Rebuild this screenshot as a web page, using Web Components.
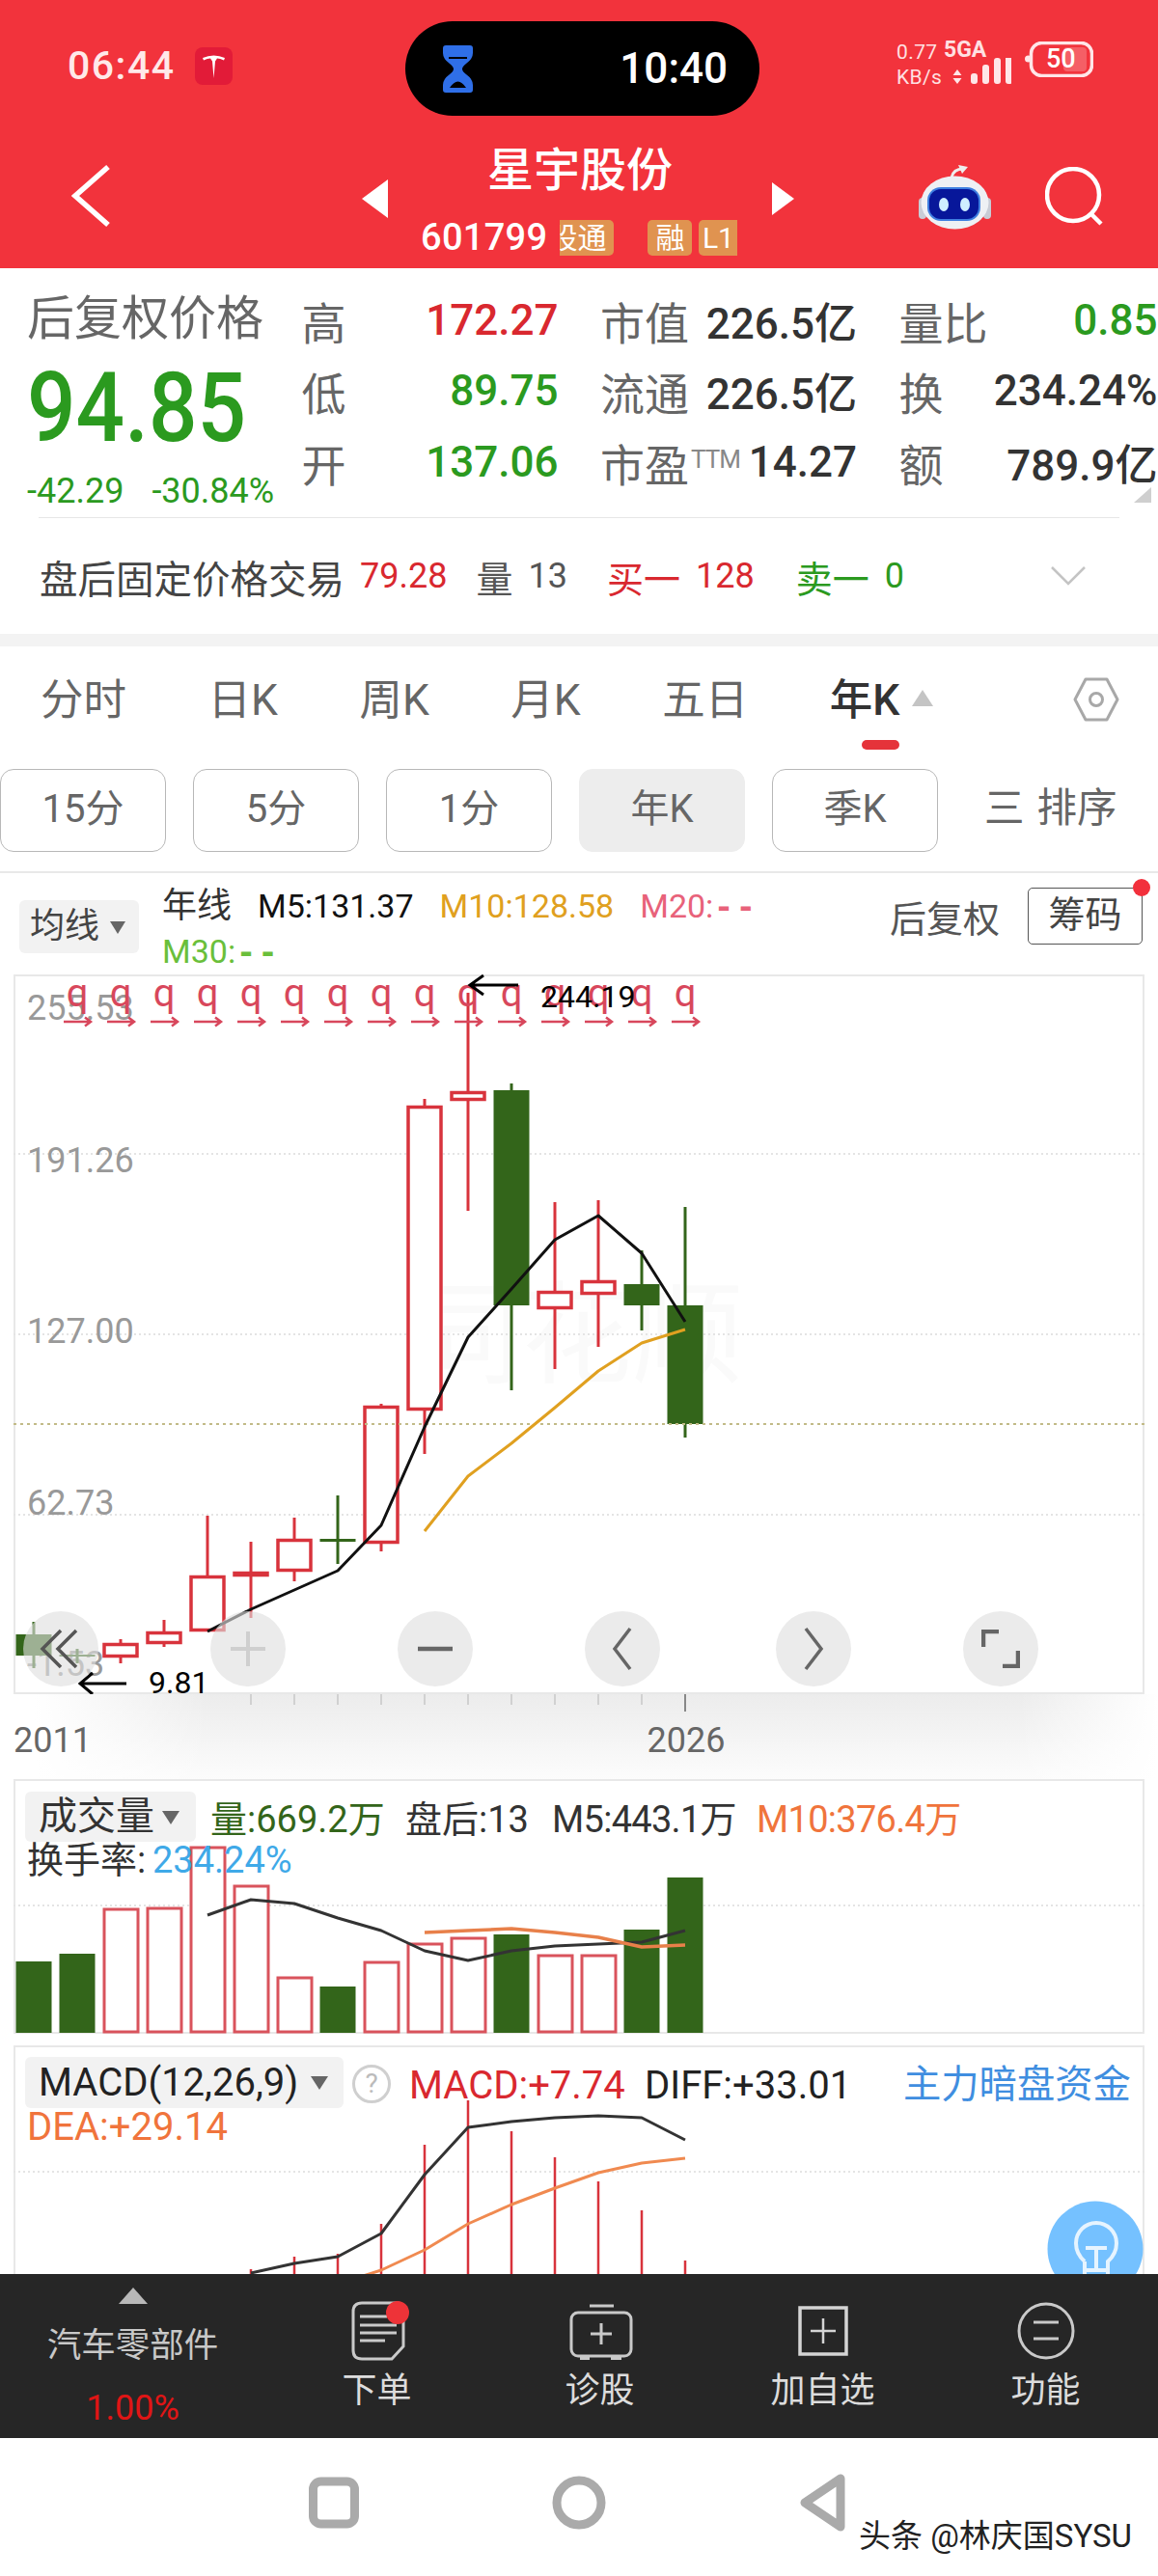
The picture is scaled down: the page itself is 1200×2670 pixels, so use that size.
<!DOCTYPE html>
<html lang="zh-CN">
<head>
<meta charset="utf-8">
<title>星宇股份</title>
<style>
html, body { margin: 0; background: #fff; }
body {
  width: 1200px;
  height: 2670px;
  overflow: hidden;
  font-family: Roboto, "Noto Sans CJK SC", sans-serif;
  color: #333;
}
</style>
</head>
<body>
<status-bar></status-bar>
<stock-header></stock-header>
<quote-panel>
  <quote-cell label="高" tone="red">172.27</quote-cell>
  <quote-cell label="市值">226.5亿</quote-cell>
  <quote-cell label="量比" tone="green">0.85</quote-cell>
  <quote-cell label="低" tone="green">89.75</quote-cell>
  <quote-cell label="流通">226.5亿</quote-cell>
  <quote-cell label="换">234.24%</quote-cell>
  <quote-cell label="开" tone="green">137.06</quote-cell>
  <quote-cell label="市盈" sup="TTM">14.27</quote-cell>
  <quote-cell label="额">789.9亿</quote-cell>
</quote-panel>
<period-tabs></period-tabs>
<chart-legend></chart-legend>
<kline-chart></kline-chart>
<time-axis></time-axis>
<volume-chart></volume-chart>
<macd-chart></macd-chart>
<action-bar>
  <action-item label="下单">
    <svg width="70" height="70" viewBox="355 2385 70 70" fill="none" stroke="#c9c9c9" stroke-width="3">
      <path d="M374 2388H410Q417 2388 417 2395V2433L405 2446H374Q365 2446 365 2437V2397Q365 2388 374 2388Z"/>
      <path d="M372 2402H400M372 2411H410M372 2419H410M372 2427H398"/>
      <circle cx="411" cy="2398" r="12" fill="#ee3338" stroke="none"/>
    </svg>
  </action-item>
  <action-item label="诊股">
    <svg width="70" height="70" viewBox="586 2385 70 70" fill="none" stroke="#c9c9c9" stroke-width="3">
      <path d="M610 2391H635"/>
      <rect x="591" y="2398" width="62" height="45" rx="7"/>
      <path d="M600 2445H610M632 2445H643" stroke-width="4"/>
      <path d="M622 2409V2431M611 2420H633"/>
    </svg>
  </action-item>
  <action-item label="加自选">
    <svg width="70" height="70" viewBox="818 2385 70 70" fill="none" stroke="#d4d4d4" stroke-width="3.5">
      <rect x="829" y="2393" width="48" height="48"/>
      <path d="M853 2404V2430M840 2417H866" stroke-width="2.5"/>
    </svg>
  </action-item>
  <action-item label="功能">
    <svg width="70" height="70" viewBox="1049 2385 70 70" fill="none" stroke="#c9c9c9" stroke-width="3">
      <circle cx="1084" cy="2417" r="28"/>
      <path d="M1071 2408H1097M1071 2425H1097"/>
    </svg>
  </action-item>
</action-bar>
<nav-bar></nav-bar>

<script>
const RED = "#d8333c";
const GREEN = "#33651a";
const XS = Array.from({ length: 16 }, (_, i) => 35 + i * 45);

// every custom element here has the same shape: fixed markup in an open shadow root
class ShadowPart extends HTMLElement {
  constructor() {
    super();
    const root = this.attachShadow({ mode: "open" });
    root.innerHTML = `<style>${this.constructor.css}</style>${this.markup()}`;
  }
  markup() {
    return "";
  }
}

const line = (points, color, width) =>
  `<polyline fill="none" stroke="${color}" stroke-width="${width}" stroke-linejoin="round" points="${points
    .map((p) => p.join(","))
    .join(" ")}"/>`;

const hline = (y, color, dash, width = 2) =>
  `<path d="M14 ${y}H1186" stroke="${color}" stroke-width="${width}" stroke-dasharray="${dash}"/>`;

class StatusBar extends ShadowPart {
  static css = `
  :host { display: grid; grid-template-columns: 420px 367px 1fr; height: 142px; background: #f2333c; color: #fff; align-items: center; }
  .left { display: flex; align-items: center; padding: 0 0 6px 70px; gap: 20px; font-size: 41px; font-weight: 500; letter-spacing: 1.5px; color: #ffe9e9; }
  .pill { height: 98px; background: #000; border-radius: 49px; display: flex; align-items: center; justify-content: space-between; padding: 0 33px 0 39px; font-size: 44px; font-weight: 500; box-sizing: border-box; }
  .right { display: flex; align-items: flex-start; padding: 0 0 6px 142px; color: #ffe0e2; }
  .net { font-size: 21px; line-height: 26px; width: 49px; letter-spacing: .4px; }
  .sig { width: 84px; font-size: 23px; font-weight: 700; line-height: 22px; }
  .sig svg { display: block; margin-top: -3px; margin-left: -2px; }
  .bat { position: relative; width: 71px; height: 37px; font-size: 27px; font-weight: 500; color: #fff; margin-top: 2px; }
  .bat span { position: absolute; left: 22px; top: 3px; line-height: 30px; }
  `;
  markup() {
    return `
    <div class="left">06:44
      <svg width="39" height="39" viewBox="0 0 39 39">
        <rect width="39" height="39" rx="8" fill="#e21b38"/>
        <path d="M8 11Q19.5 6 31 11L30 13.5Q26 11.5 23 11.5L21 14.5L19.5 32L18 14.5L16 11.5Q13 11.5 9 13.5Z" fill="#fff"/>
      </svg>
    </div>
    <div class="pill">
      <svg width="31" height="49" viewBox="0 0 31 49">
        <path d="M3 0H28Q31 0 31 3V8Q31 14 24 19Q20 22 20 24.5Q20 27 24 30Q31 35 31 41V46Q31 49 28 49H3Q0 49 0 46V41Q0 35 7 30Q11 27 11 24.5Q11 22 7 19Q0 14 0 8V3Q0 0 3 0Z" fill="#2f6fe8"/>
        <path d="M6 13H25" stroke="#000" stroke-width="2"/>
        <path d="M7 44Q15.5 31 24 44Z" fill="#000"/>
      </svg>
      <span>10:40</span>
    </div>
    <div class="right">
      <div class="net">0.77<br>KB/s</div>
      <div class="sig">5GA
        <svg width="72" height="36" viewBox="0 0 72 36" fill="#ffe6e8">
          <path d="M16 7L20.500 13H11.500ZM11.500 16H20.500L16 22Z" transform="translate(0 5)"/>
          <rect x="30" y="16" width="7" height="11" rx="3"/>
          <rect x="42" y="7" width="7" height="20" rx="3"/>
          <rect x="54" y="0" width="7" height="27" rx="3"/>
          <rect x="66" y="-8" width="7" height="35" rx="3"/>
        </svg>
      </div>
      <div class="bat">
        <svg width="71" height="37" viewBox="0 0 71 37" fill="none">
          <circle cx="3.500" cy="18" r="3.500" fill="#ffe6e8"/>
          <rect x="40" y="6" width="24" height="25" rx="4" fill="#fff" fill-opacity=".22"/>
          <rect x="6.500" y="1.500" width="63" height="34" rx="11" stroke="#ffe6e8" stroke-width="3.500"/>
        </svg>
        <span>50</span>
      </div>
    </div>`;
  }
}
customElements.define("status-bar", StatusBar);

class StockHeader extends ShadowPart {
  static css = `
  :host { display: grid; grid-template-columns: 375px 27px 398px 23px 1fr; height: 136px; background: #f2333c; color: #fff; align-items: center; }
  .back { padding: 0 0 14px 74px; }
  .back svg { display: block; }
  .tri { margin-bottom: 8px; display: block; }
  .mid { display: flex; flex-direction: column; height: 136px; }
  .name { font-size: 48px; line-height: 70px; text-align: center; height: 70px; font-weight: 500; }
  .code { display: flex; align-items: center; padding-left: 34px; margin-top: 12px; font-size: 38px; font-weight: 500; letter-spacing: .3px; }
  .tag { height: 37px; line-height: 37px; background: #e09350; font-size: 30px; font-weight: 400; color: #fff; box-sizing: border-box; overflow: hidden; display: flex; justify-content: center; letter-spacing: 0; white-space: nowrap; }
  .t1 { width: 56px; margin-left: 13px; justify-content: flex-end; padding-right: 8px; border-radius: 0 5px 5px 0; }
  .t2 { width: 46px; margin-left: 35px; border-radius: 5px; }
  .t3 { width: 40px; margin-left: 7px; border-radius: 5px 0 0 5px; }
  .tools { display: flex; align-items: center; padding: 0 0 12px 129px; gap: 55px; }
  `;
  markup() {
    return `
    <div class="back">
      <svg width="42" height="66" viewBox="0 0 42 66" fill="none" stroke="#fff" stroke-width="5.500">
        <path d="M38 3L4 33L38 63"/>
      </svg>
    </div>
    <svg class="tri" width="27" height="40" viewBox="0 0 27 40"><path d="M27 0V40L0 20Z" fill="#fff"/></svg>
    <div class="mid">
      <div class="name">星宇股份</div>
      <div class="code">601799
        <span class="tag t1">股通</span><span class="tag t2">融</span><span class="tag t3">L1</span>
      </div>
    </div>
    <svg class="tri" width="23" height="34" viewBox="0 0 23 34"><path d="M0 0V34L23 17Z" fill="#fff"/></svg>
    <div class="tools">
      <svg width="76" height="70" viewBox="952 169 76 70">
        <path d="M986 184Q988 175 998 175" fill="none" stroke="#eee" stroke-width="3"/>
        <path d="M993 171L1003 173L997 180Z" fill="#eee"/>
        <rect x="952" y="205" width="8" height="22" rx="4" fill="#c8ccd6"/>
        <rect x="1019" y="205" width="8" height="22" rx="4" fill="#c8ccd6"/>
        <ellipse cx="989.500" cy="210" rx="35" ry="27.500" fill="#eef0f4"/>
        <rect x="961" y="194" width="55" height="35" rx="14" fill="#3f7fe0"/>
        <rect x="963" y="196" width="51" height="31" rx="12" fill="#07179a"/>
        <ellipse cx="978" cy="212" rx="5" ry="7" fill="#cfefff"/>
        <ellipse cx="1000" cy="212" rx="5" ry="7" fill="#cfefff"/>
      </svg>
      <svg width="60" height="62" viewBox="1081 175 60 62" fill="none" stroke="#fff" stroke-width="4.500">
        <circle cx="1110" cy="204" r="27"/>
        <path d="M1128 223L1139 234"/>
      </svg>
    </div>`;
  }
}
customElements.define("stock-header", StockHeader);

class QuoteCell extends ShadowPart {
  static css = `
  :host { display: flex; align-items: center; justify-content: space-between; height: 73.500px; white-space: nowrap; }
  .k { font-size: 46px; color: #666; }
  .k sup { font-size: 26px; color: #888; vertical-align: 14px; line-height: 0; margin-left: 2px; letter-spacing: -1px; }
  .v { font-size: 44px; font-weight: 500; color: #333; }
  :host([tone="red"]) .v { color: #d9282f; }
  :host([tone="green"]) .v { color: #2b9a1f; }
  `;
  markup() {
    const sup = this.getAttribute("sup");
    return `<span class="k">${this.getAttribute("label")}${sup ? `<sup>${sup}</sup>` : ""}</span><span class="v"><slot></slot></span>`;
  }
}
customElements.define("quote-cell", QuoteCell);

class QuotePanel extends ShadowPart {
  static css = `
  :host { display: block; position: relative; height: 379px; background: #fff; }
  .top { display: grid; grid-template-columns: 241px 266px 266px 268px; grid-template-rows: repeat(3, 73.500px); column-gap: 43.500px; padding: 17px 0 0 28px; height: 258px; box-sizing: border-box; }
  .side { grid-row: 1 / span 3; grid-column: 1; display: flex; flex-direction: column; margin-top: 2px; white-space: nowrap; }
  .title { font-size: 49px; line-height: 68px; color: #666; }
  .price { font-size: 100px; line-height: 116px; font-weight: 500; color: #2b9a1f; transform: scaleX(.89); transform-origin: left; }
  .chg { font-size: 36px; line-height: 44px; color: #2b9a1f; display: flex; gap: 29px; margin-top: 6px; }
  .corner { position: absolute; left: 1175px; top: 227px; }
  .rule { height: 1px; background: #e6e6e6; margin: 0 40px; }
  .fixed { display: flex; align-items: center; height: 120px; padding-left: 41px; font-size: 36px; white-space: nowrap; color: #555; }
  .fixed .lab { font-size: 39.500px; color: #444; }
  .fixed .cn { font-size: 38px; }
  .r { color: #d9282f; } .g { color: #2b9a1f; }
  .fixed svg { margin-left: auto; margin-right: 75px; }
  `;
  markup() {
    return `
    <div class="top">
      <div class="side">
        <div class="title">后复权价格</div>
        <div class="price">94.85</div>
        <div class="chg"><span>-42.29</span><span>-30.84%</span></div>
      </div>
      <slot></slot>
    </div>
    <svg class="corner" width="18" height="16" viewBox="0 0 18 16"><path d="M18 0V16H0Z" fill="#cfcfcf"/></svg>
    <div class="rule"></div>
    <div class="fixed">
      <span class="lab">盘后固定价格交易</span>
      <span class="r" style="margin-left:16px">79.28</span>
      <span class="cn" style="margin-left:30px">量</span>
      <span style="margin-left:16px">13</span>
      <span class="cn r" style="margin-left:41px">买一</span>
      <span class="r" style="margin-left:16px">128</span>
      <span class="cn g" style="margin-left:43px">卖一</span>
      <span class="g" style="margin-left:16px">0</span>
      <svg width="36" height="20" viewBox="0 0 36 20" fill="none" stroke="#c4c4c4" stroke-width="2.500"><path d="M1 1L18 18L35 1"/></svg>
    </div>`;
  }
}
customElements.define("quote-panel", QuotePanel);

class PeriodTabs extends ShadowPart {
  static css = `
  :host { display: block; border-top: 13px solid #f3f3f3; background: #fff; }
  .tabs { display: flex; height: 120px; padding-left: 42px; gap: 84.500px; position: relative; font-size: 44.500px; color: #666; box-sizing: border-box; line-height: 112px; }
  .on { color: #333; font-weight: 500; position: relative; white-space: nowrap; }
  .on::after { content: ""; position: absolute; left: 33px; top: 97px; width: 39px; height: 10px; border-radius: 5px; background: #e5333a; }
  .on i { display: inline-block; border: 11px solid transparent; border-top: 0; border-bottom: 17px solid #c4c4c4; margin: 0 0 9px 13px; }
  .hex { position: absolute; left: 1112px; top: 32px; }
  .subs { display: flex; gap: 28px; padding-top: 7px; font-size: 40px; color: #666; align-items: center; height: 86px; }
  .subs span { width: 172px; height: 86px; line-height: 82px; text-align: center; border: 1.500px solid #b8b8b8; border-radius: 14px; box-sizing: border-box; }
  .subs .on2 { background: #ededed; border-color: #ededed; }
  .subs .sort { border: 0; width: auto; margin-left: 20px; white-space: nowrap; font-size: 41.500px; }
  .subs .sort b { font-weight: 400; margin-right: 13px; }
  .rule { height: 2px; background: #e8e8e8; margin-top: 20px; }
  `;
  markup() {
    return `
    <div class="tabs">
      <span>分时</span><span>日K</span><span>周K</span><span>月K</span><span>五日</span>
      <span class="on">年K<i></i></span>
      <svg class="hex" width="48" height="46" viewBox="0 0 48 46" fill="none" stroke="#a8a8a8" stroke-width="3">
        <path d="M13 2H35L46 23L35 44H13L2 23Z" stroke-linejoin="round"/>
        <circle cx="24" cy="23" r="6.500"/>
      </svg>
    </div>
    <div class="subs">
      <span>15分</span><span>5分</span><span>1分</span><span class="on2">年K</span><span>季K</span>
      <span class="sort"><b>三</b>排序</span>
    </div>
    <div class="rule"></div>`;
  }
}
customElements.define("period-tabs", PeriodTabs);

class ChartLegend extends ShadowPart {
  static css = `
  :host { display: flex; height: 105px; background: #fff; position: relative; box-sizing: border-box; }
  .chip { position: absolute; left: 20px; top: 28px; width: 124px; height: 55px; background: #f2f2f2; border-radius: 6px; font-size: 36px; line-height: 55px; padding-left: 11px; box-sizing: border-box; color: #444; }
  .chip i { position: absolute; left: 94px; top: 22px; border: 8px solid transparent; border-top: 13px solid #666; border-bottom: 0; }
  .text { margin-left: 168px; padding-top: 12px; width: 700px; font-size: 34px; line-height: 45px; white-space: nowrap; }
  .text span { margin-right: 27px; }
  .text .cn { font-size: 36px; color: #333; }
  .text b { font: 700 36px/45px "Liberation Mono", monospace; letter-spacing: 1px; }
  .right { position: absolute; left: 922px; top: 14px; display: flex; align-items: center; height: 60px; font-size: 38px; color: #555; }
  .box { margin-left: 29px; width: 119px; height: 59px; line-height: 55px; border: 1.500px solid #555; border-radius: 5px; text-align: center; position: relative; box-sizing: border-box; color: #444; }
  .box::after { content: ""; position: absolute; right: -9px; top: -10px; width: 18px; height: 18px; border-radius: 50%; background: #f2303c; }
  `;
  markup() {
    return `
    <div class="chip">均线<i></i></div>
    <div class="text">
      <span class="cn">年线</span><span style="color:#111">M5:131.37</span><span style="color:#e0a020">M10:128.58</span><span style="color:#e8627a">M20:<b>--</b></span><br>
      <span style="color:#6abf3a">M30:<b>--</b></span>
    </div>
    <div class="right">后复权<div class="box">筹码</div></div>`;
  }
}
customElements.define("chart-legend", ChartLegend);

class KlineChart extends ShadowPart {
  static css = `
  :host { display: block; position: relative; width: 1172px; height: 746px; margin-left: 14px; }
  svg.plot { display: block; font-family: Roboto, "Noto Sans CJK SC", sans-serif; }
  .btns { position: absolute; left: 10px; top: 660px; display: flex; gap: 116px; }
  .btns span { width: 78px; height: 78px; border-radius: 50%; background: rgba(222, 222, 222, .62); display: flex; align-items: center; justify-content: center; }
  `;
  markup() {
    // [x, wickTop, wickBottom, bodyTop, bodyBottom, green?]
    const candles = [
      [0, 1682, 1730, 1695, 1717, 1],
      [1, 1710, 1725, 1716, 1718, 1],
      [2, 1700, 1725, 1704, 1719],
      [3, 1680, 1708, 1692, 1705],
      [4, 1572, 1692, 1634, 1692],
      [5, 1599, 1678, 1630, 1635],
      [6, 1574, 1640, 1596, 1630],
      [7, 1551, 1622, 1596, 1599, 1],
      [8, 1456, 1609, 1458, 1601],
      [9, 1140, 1508, 1147, 1463],
      [10, 1030, 1256, 1132, 1142],
      [11, 1124, 1442, 1131, 1354, 1],
      [12, 1247, 1420, 1339, 1358],
      [13, 1245, 1397, 1328, 1343],
      [14, 1297, 1380, 1332, 1354, 1],
      [15, 1252, 1491, 1354, 1477, 1],
    ]
      .map(([i, wt, wb, bt, bb, down]) => {
        const x = XS[i];
        if (down) {
          return `<path d="M${x} ${wt}V${wb}" stroke="${GREEN}" stroke-width="3"/><rect x="${x - 18.5}" y="${bt}" width="37" height="${bb - bt}" fill="${GREEN}"/>`;
        }
        return `<path d="M${x} ${wt}V${wb}" stroke="${RED}" stroke-width="3"/><rect x="${x - 17}" y="${bt + 1.5}" width="34" height="${bb - bt - 3}" fill="#fff" stroke="${RED}" stroke-width="3.500"/>`;
      })
      .join("");

    const marks = XS.slice(1)
      .map(
        (x) =>
          `<text x="${x}" y="1044" font-size="40" fill="#d8475c" text-anchor="middle">q</text>
           <path d="M${x - 14} 1060H${x + 13}M${x + 8} 1055.500L${x + 14} 1060L${x + 8} 1064.500" fill="none" stroke="#d8475c" stroke-width="2.500"/>`,
      )
      .join("");

    const axis = [
      ["255.53", 1058],
      ["191.26", 1216],
      ["127.00", 1393],
      ["62.73", 1571],
      ["-1.53", 1738],
    ]
      .map(([t, y]) => `<text x="28" y="${y}" font-size="36" fill="#999">${t}</text>`)
      .join("");

    const ma5 = [[215, 1692], [260, 1669], [305, 1649], [350, 1629], [395, 1582], [440, 1480], [485, 1387], [530, 1337], [575, 1286], [620, 1261], [665, 1300], [710, 1371]];
    const ma10 = [[440, 1588], [485, 1531], [530, 1497], [575, 1460], [620, 1422], [665, 1393], [710, 1379]];

    return `
    <svg class="plot" width="1172" height="746" viewBox="14 1011 1172 746">
      <rect x="15" y="1012" width="1170" height="744" fill="#fff" stroke="#e8e8e8" stroke-width="2"/>
      <text x="425" y="1425" font-size="115" fill="#fafafa">同花顺</text>
      ${hline(1197, "#e4e4e4", "2 3")}
      ${hline(1384, "#e4e4e4", "2 3")}
      ${hline(1571, "#e4e4e4", "2 3")}
      ${axis}
      ${candles}
      ${hline(1477, "#c2bb88", "3 4")}
      ${marks}
      ${line(ma5, "#111", 3)}
      ${line(ma10, "#e0a020", 3)}
      <path d="M537 1022H487M501 1012L487 1022L501 1032M131 1746H83M96 1735L83 1746L96 1757" fill="none" stroke="#000" stroke-width="3"/>
      <text x="560" y="1045" font-size="32" fill="#000">244.19</text>
      <text x="154" y="1756" font-size="32" fill="#000">9.81</text>
    </svg>
    <div class="btns">
      <span><svg width="50" height="50" viewBox="0 0 50 50" fill="none" stroke="#555" stroke-width="3.500"><path d="M25 6L6 25L25 44M41 6L22 25L41 44"/></svg></span>
      <span><svg width="40" height="40" viewBox="0 0 40 40" fill="none" stroke="#cfcfcf" stroke-width="4"><path d="M20 2V38M2 20H38"/></svg></span>
      <span><svg width="40" height="10" viewBox="0 0 40 10"><path d="M2 5H38" stroke="#666" stroke-width="4.500"/></svg></span>
      <span><svg width="24" height="50" viewBox="0 0 24 50" fill="none" stroke="#666" stroke-width="3.500"><path d="M20 4L4 25L20 46"/></svg></span>
      <span style="margin-left:4px"><svg width="24" height="50" viewBox="0 0 24 50" fill="none" stroke="#666" stroke-width="3.500"><path d="M4 4L20 25L4 46"/></svg></span>
      <span><svg width="40" height="40" viewBox="0 0 40 40" fill="none" stroke="#666" stroke-width="4.500"><path d="M18 2H2V18M38 22V38H22"/></svg></span>
    </div>`;
  }
}
customElements.define("kline-chart", KlineChart);

class TimeAxis extends ShadowPart {
  static css = `
  :host { display: block; height: 88px; background: linear-gradient(90deg, #fff 3%, transparent 18%, transparent 88%, #fff), linear-gradient(#ececec, #fcfcfc); }
  svg { display: block; font-family: Roboto, sans-serif; }
  `;
  markup() {
    const ticks = XS.slice(5, 15).map((x) => `M${x} 0V11`).join("");
    return `
    <svg width="1200" height="88" viewBox="0 0 1200 88">
      <path d="${ticks}" stroke="#c8c8c8" stroke-width="1.500"/>
      <path d="M710 0V18" stroke="#888" stroke-width="2"/>
      <text x="14" y="60" font-size="36" fill="#666">2011</text>
      <text x="711" y="60" font-size="36" fill="#666" text-anchor="middle">2026</text>
    </svg>`;
  }
}
customElements.define("time-axis", TimeAxis);

class VolumeChart extends ShadowPart {
  static css = `
  :host { display: block; position: relative; width: 1172px; height: 276px; margin-left: 14px; }
  svg { display: block; }
  .chip { position: absolute; left: 12px; top: 13px; width: 177px; height: 52px; background: #f2f2f2; border-radius: 6px; font-size: 40px; line-height: 52px; padding-left: 14px; box-sizing: border-box; color: #333; }
  .chip i { position: absolute; left: 142px; top: 20px; border: 9px solid transparent; border-top: 14px solid #666; border-bottom: 0; }
  .row { position: absolute; white-space: nowrap; font-size: 38px; line-height: 44px; }
  .row span { position: absolute; top: 0; }
  `;
  markup() {
    const tops = [2034, 2026, 1979, 1978, 1915, 1955, 2050, 2060, 2034, 2015, 2009, 2006, 2027, 2027, 2001, 1947];
    const downs = [0, 1, 7, 11, 14, 15];
    const bars = tops
      .map((t, i) =>
        downs.includes(i)
          ? `<rect x="${XS[i] - 18.5}" y="${t}" width="37" height="${2108 - t}" fill="${GREEN}"/>`
          : `<rect x="${XS[i] - 17}" y="${t + 1}" width="35" height="${2106 - t}" fill="#fff" stroke="#d9535c" stroke-width="3"/>`,
      )
      .join("");
    const m5 = [[215, 1986], [260, 1970], [305, 1974], [350, 1989], [395, 2002], [440, 2023], [485, 2033], [530, 2023], [575, 2018], [620, 2016], [665, 2014], [710, 2002]];
    const m10 = [[440, 2004], [485, 2002], [530, 2000], [575, 2004], [620, 2009], [665, 2019], [710, 2017]];
    return `
    <svg width="1172" height="276" viewBox="14 1845 1172 276">
      <path d="M15 2108V1846H1185V2108M14 2108H1186" fill="#fff" stroke="#e8e8e8" stroke-width="2"/>
      ${hline(1976, "#e4e4e4", "2 3")}
      ${bars}
      ${line(m5, "#333", 3)}
      ${line(m10, "#e8804a", 3.500)}
    </svg>
    <div class="chip">成交量<i></i></div>
    <div class="row" style="left:0;top:20px">
      <span style="left:204px;color:${GREEN}">量:669.2万</span>
      <span style="left:406px;color:#333">盘后:13</span>
      <span style="left:558px;color:#333;letter-spacing:-.7px">M5:443.1万</span>
      <span style="left:770px;color:#f0743c;letter-spacing:-.7px">M10:376.4万</span>
    </div>
    <div class="row" style="left:14px;top:62px;color:#333">换手率:<span style="left:130px;color:#3fa9e8">234.24%</span></div>`;
  }
}
customElements.define("volume-chart", VolumeChart);

class MacdChart extends ShadowPart {
  static css = `
  :host { display: block; position: relative; width: 1172px; height: 237px; margin-left: 14px; overflow: hidden; }
  svg { display: block; }
  .chip { position: absolute; left: 12px; top: 12px; width: 330px; height: 53px; background: #f2f2f2; border-radius: 6px; font-size: 40px; line-height: 53px; padding-left: 14px; box-sizing: border-box; color: #222; }
  .chip i { position: absolute; left: 296px; top: 20px; border: 9px solid transparent; border-top: 14px solid #666; border-bottom: 0; }
  .help { position: absolute; left: 351px; top: 20px; width: 40px; height: 40px; box-sizing: border-box; border: 3px solid #cfcfcf; border-radius: 50%; text-align: center; font-size: 28px; line-height: 34px; color: #bbb; }
  .t { position: absolute; font-size: 40px; line-height: 48px; white-space: nowrap; }
  `;
  markup() {
    const bars = [[260, 2353], [305, 2340], [350, 2337], [395, 2306], [440, 2224], [485, 2178], [530, 2210], [575, 2237], [620, 2262], [665, 2292], [710, 2344]]
      .map(([x, t]) => `M${x} ${t}V2360`)
      .join("");
    const diff = [[260, 2357], [305, 2347], [350, 2340], [395, 2316], [440, 2255], [485, 2206], [530, 2200], [575, 2196], [620, 2194], [665, 2196], [710, 2219]];
    const dea = [[370, 2362], [395, 2354], [440, 2333], [485, 2306], [530, 2286], [575, 2269], [620, 2253], [665, 2243], [710, 2238]];
    return `
    <svg width="1172" height="237" viewBox="14 2121 1172 237">
      <path d="M15 2360V2122H1185V2360" fill="#fff" stroke="#e8e8e8" stroke-width="2"/>
      ${hline(2252, "#e4e4e4", "2 3")}
      <path d="${bars}" stroke="#d8333c" stroke-width="2.500"/>
      ${line(diff, "#333", 3)}
      ${line(dea, "#f08a50", 3)}
      <circle cx="1135" cy="2332" r="49.500" fill="#75c1ff"/>
      <path d="M1124 2345Q1115 2337 1115 2326A21 21 0 1 1 1157 2326Q1157 2337 1148 2345V2360M1124 2345V2360M1125 2331H1147M1136 2331V2352M1124 2354H1148" fill="none" stroke="#e6f4ff" stroke-width="4"/>
    </svg>
    <div class="chip">MACD(12,26,9)<i></i></div>
    <div class="help">?</div>
    <div class="t" style="left:410px;top:18px;color:#d9282f">MACD:+7.74</div>
    <div class="t" style="left:654px;top:18px;color:#222">DIFF:+33.01</div>
    <div class="t" style="left:922px;top:17px;color:#3f8ee0;font-size:39.300px">主力暗盘资金</div>
    <div class="t" style="left:14px;top:61px;color:#f0743c">DEA:+29.14</div>`;
  }
}
customElements.define("macd-chart", MacdChart);

class ActionItem extends ShadowPart {
  static css = `
  :host { display: flex; flex-direction: column; align-items: center; padding-top: 27px; }
  .ico { height: 74px; }
  .lab { font-size: 36px; line-height: 40px; color: #dcdcdc; }
  `;
  markup() {
    return `<div class="ico"><slot></slot></div><div class="lab">${this.getAttribute("label")}</div>`;
  }
}
customElements.define("action-item", ActionItem);

class ActionBar extends ShadowPart {
  static css = `
  :host { display: grid; grid-template-columns: 275px repeat(4, 231px); height: 170px; background: #262626; position: relative; }
  .sector { display: flex; flex-direction: column; align-items: center; padding-top: 14px; }
  .up { width: 0; height: 0; border: 15px solid transparent; border-top: 0; border-bottom: 17px solid #b8b8b8; }
  .nm { font-size: 35.500px; line-height: 44px; color: #c8c8c8; margin-top: 21px; }
  .pc { font-size: 36px; line-height: 44px; color: #e01515; margin-top: 21px; }
  `;
  markup() {
    return `
    <div class="sector"><div class="up"></div><div class="nm">汽车零部件</div><div class="pc">1.00%</div></div>
    <slot></slot>`;
  }
}
customElements.define("action-bar", ActionBar);

class NavBar extends ShadowPart {
  static css = `
  :host { display: flex; position: relative; height: 142px; background: #fff; justify-content: center; align-items: center; gap: 194px; padding-bottom: 8px; box-sizing: border-box; }
  .mark { position: absolute; left: 890px; top: 82px; font-size: 33px; line-height: 40px; color: #222; white-space: nowrap; }
  `;
  markup() {
    return `
    <svg width="60" height="60" viewBox="0 0 60 60" fill="none" stroke="#aaa" stroke-width="9"><rect x="8.500" y="8" width="43" height="44" rx="8"/></svg>
    <svg width="60" height="60" viewBox="0 0 60 60" fill="none" stroke="#aaa" stroke-width="9"><circle cx="30" cy="30" r="23"/></svg>
    <svg width="60" height="60" viewBox="0 0 60 60" fill="none" stroke="#aaa" stroke-width="9" stroke-linejoin="round"><path d="M47 5V55L10 30Z"/></svg>
    <div class="mark">头条 @林庆国SYSU</div>`;
  }
}
customElements.define("nav-bar", NavBar);
</script>
</body>
</html>
